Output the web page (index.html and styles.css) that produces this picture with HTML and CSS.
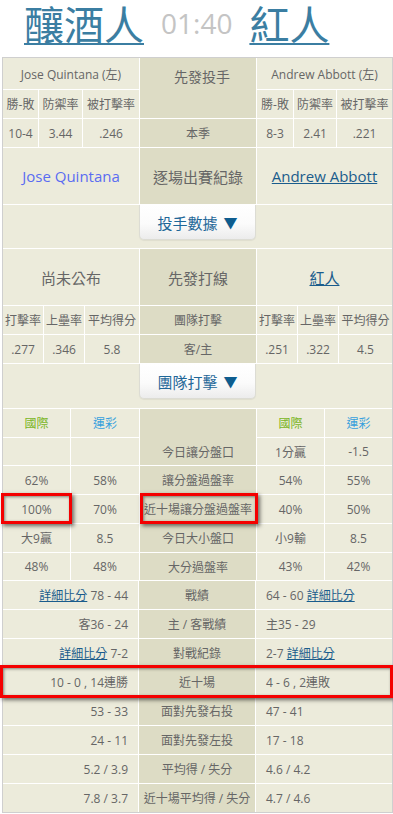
FILE: index.html
```html
<!DOCTYPE html>
<html lang="zh-Hant">
<head>
<meta charset="utf-8">
<title>釀酒人 vs 紅人</title>
<link rel="stylesheet" href="styles.css">
</head>
<body>
<header class="title">
  <a class="team" href="#">釀酒人</a>
  <span class="time">01:40</span>
  <a class="team" href="#">紅人</a>
</header>

<div class="board">
  <section class="grid pitch">
    <div class="c s3 h31">Jose Quintana (左)</div>
    <div class="c mid rs2 top big14">先發投手</div>
    <div class="c s3 h31">Andrew Abbott (左)</div>
    <div class="c">勝-敗</div><div class="c">防禦率</div><div class="c">被打擊率</div>
    <div class="c">勝-敗</div><div class="c">防禦率</div><div class="c">被打擊率</div>
    <div class="c">10-4</div><div class="c">3.44</div><div class="c">.246</div>
    <div class="c mid">本季</div>
    <div class="c">8-3</div><div class="c">2.41</div><div class="c">.221</div>
    <div class="c s3 big name">Jose Quintana</div>
    <div class="c mid big">逐場出賽紀錄</div>
    <div class="c s3 big"><a class="link" href="#">Andrew Abbott</a></div>
  </section>

  <div class="btnrow"><button class="btn" type="button"><span>投手數據</span><span class="tri">▼</span></button></div>

  <section class="grid lineup">
    <div class="c s3 big tall">尚未公布</div>
    <div class="c mid big">先發打線</div>
    <div class="c s3 big"><a class="link" href="#">紅人</a></div>
    <div class="c">打擊率</div><div class="c">上壘率</div><div class="c">平均得分</div>
    <div class="c mid">團隊打擊</div>
    <div class="c">打擊率</div><div class="c">上壘率</div><div class="c">平均得分</div>
    <div class="c">.277</div><div class="c">.346</div><div class="c">5.8</div>
    <div class="c mid">客/主</div>
    <div class="c">.251</div><div class="c">.322</div><div class="c">4.5</div>
  </section>

  <div class="btnrow b2"><button class="btn" type="button"><span>團隊打擊</span><span class="tri">▼</span></button></div>

  <section class="grid odds">
    <div class="c g">國際</div><div class="c b">運彩</div>
    <div class="c mid rs2 low">今日讓分盤口</div>
    <div class="c g">國際</div><div class="c b">運彩</div>
    <div class="c"></div><div class="c"></div>
    <div class="c">1分贏</div><div class="c">-1.5</div>
    <div class="c">62%</div><div class="c">58%</div>
    <div class="c mid">讓分盤過盤率</div>
    <div class="c">54%</div><div class="c">55%</div>
    <div class="c hl hl-a">100%</div><div class="c">70%</div>
    <div class="c mid hl hl-b">近十場讓分盤過盤率</div>
    <div class="c">40%</div><div class="c">50%</div>
    <div class="c">大9贏</div><div class="c">8.5</div>
    <div class="c mid">今日大小盤口</div>
    <div class="c">小9輸</div><div class="c">8.5</div>
    <div class="c">48%</div><div class="c">48%</div>
    <div class="c mid">大分過盤率</div>
    <div class="c">43%</div><div class="c">42%</div>
  </section>

  <section class="records">
    <div class="rec"><div class="c l"><span><a class="link" href="#">詳細比分</a> 78 - 44</span></div><div class="c mid">戰績</div><div class="c r"><span>64 - 60 <a class="link" href="#">詳細比分</a></span></div></div>
    <div class="rec"><div class="c l"><span>客36 - 24</span></div><div class="c mid">主 / 客戰績</div><div class="c r"><span>主35 - 29</span></div></div>
    <div class="rec"><div class="c l"><span><a class="link" href="#">詳細比分</a> 7-2</span></div><div class="c mid">對戰紀錄</div><div class="c r"><span>2-7 <a class="link" href="#">詳細比分</a></span></div></div>
    <div class="rec hl hl-c"><div class="c l"><span>10 - 0 , 14連勝</span></div><div class="c mid">近十場</div><div class="c r"><span>4 - 6 , 2連敗</span></div></div>
    <div class="rec"><div class="c l"><span>53 - 33</span></div><div class="c mid">面對先發右投</div><div class="c r"><span>47 - 41</span></div></div>
    <div class="rec"><div class="c l"><span>24 - 11</span></div><div class="c mid">面對先發左投</div><div class="c r"><span>17 - 18</span></div></div>
    <div class="rec"><div class="c l"><span>5.2 / 3.9</span></div><div class="c mid">平均得 / 失分</div><div class="c r"><span>4.6 / 4.2</span></div></div>
    <div class="rec"><div class="c l"><span>7.8 / 3.7</span></div><div class="c mid">近十場平均得 / 失分</div><div class="c r"><span>4.7 / 4.6</span></div></div>
  </section>
</div>
</body>
</html>
```

FILE: styles.css
```css
* { box-sizing: border-box; }

body {
  margin: 0;
  background: #fff;
  color: #666;
  font-family: "Open Sans", "Noto Sans CJK TC", sans-serif;
  font-size: 12px;
}

.title {
  height: 57px;
  display: flex;
  align-items: flex-start;
  padding-left: 24px;
  gap: 17px;
}

.team {
  font-family: "Noto Sans CJK TC", sans-serif;
  font-size: 40px;
  line-height: 46px;
  color: #3b7ea2;
  text-decoration: underline;
  text-decoration-thickness: 2px;
  text-underline-offset: 3px;
}

.time {
  font-family: "Open Sans", sans-serif;
  font-size: 28px;
  line-height: 46px;
  color: #c4c4c4;
}

.board {
  margin-left: 2px;
  width: 391px;
  border: 1px solid #cfcfcf;
  background: #fff;
  display: flex;
  flex-direction: column;
  gap: 1px;
}

.grid {
  display: grid;
  gap: 1px;
  background: #fff;
}

.c {
  background: #ecebdb;
  display: flex;
  align-items: center;
  justify-content: center;
  white-space: nowrap;
  min-width: 0;
}

.mid { background: #dddcc5; }

.pitch {
  grid-template-columns: 35px 43px 56px 116px 36px 42px 1fr;
  grid-template-rows: 31px 28px 28px 56px;
}

.lineup {
  grid-template-columns: 40px 40px 54px 116px 40px 40px 1fr;
  grid-template-rows: 56px 28px 28px;
}

.odds {
  grid-template-columns: 67px 68px 116px 67px 1fr;
  grid-template-rows: 28px 27px 28px 28px 28px 27px;
}

.s3 { grid-column: span 3; }
.rs2 { grid-row: span 2; }
.top { align-items: flex-start; padding-top: 8px; padding-left: 8px; }
.low { align-items: flex-start; padding-top: 34px; }

.big14 { font-size: 14px; }
.big { font-size: 15px; }
.name { color: #5a6cf2; }

.link {
  color: #1a5c8c;
  text-decoration: underline;
}

.g { color: #7ab51d; }
.b { color: #37a0dd; }

.btnrow {
  height: 43px;
  background: #ecebdb;
  display: flex;
  justify-content: center;
  align-items: flex-start;
}
.btnrow.b2 { height: 44px; }

.btn {
  width: 117px;
  height: 35px;
  margin: 0;
  padding: 0;
  border: 1px solid #dcdcd4;
  border-top: none;
  border-radius: 0 0 5px 5px;
  background: linear-gradient(#ffffff 0%, #fbfbfb 55%, #ececec 100%);
  box-shadow: 0 1px 1px rgba(0,0,0,0.06);
  color: #1e6798;
  font-family: "Noto Sans CJK TC", sans-serif;
  font-size: 15px;
  line-height: 1;
  display: flex;
  align-items: center;
  justify-content: center;
  gap: 6px;
}
.tri { color: #0e5d8f; font-size: 14px; }

.records {
  display: flex;
  flex-direction: column;
  gap: 1px;
}

.rec {
  display: grid;
  grid-template-columns: 135px 116px 1fr;
  gap: 1px;
  height: 28px;
  background: #fff;
}

.rec .l { justify-content: flex-end; padding-right: 10px; }
.rec .r { justify-content: flex-start; padding-left: 10px; }

.hl { position: relative; }
.hl::after {
  content: "";
  position: absolute;
  border: 3px solid #f40000;
  box-shadow: 2px 2px 4px rgba(0,0,0,0.55), inset 1px 1px 3px rgba(0,0,0,0.45);
  pointer-events: none;
  z-index: 2;
}
.hl-a::after { top: -2px; bottom: -1px; left: -2px; right: -2px; }
.hl-b::after { top: -2px; bottom: -1px; left: 0; right: -2px; }
.hl-c::after { top: -3px; bottom: -2px; left: -3px; right: -1px; }
```
